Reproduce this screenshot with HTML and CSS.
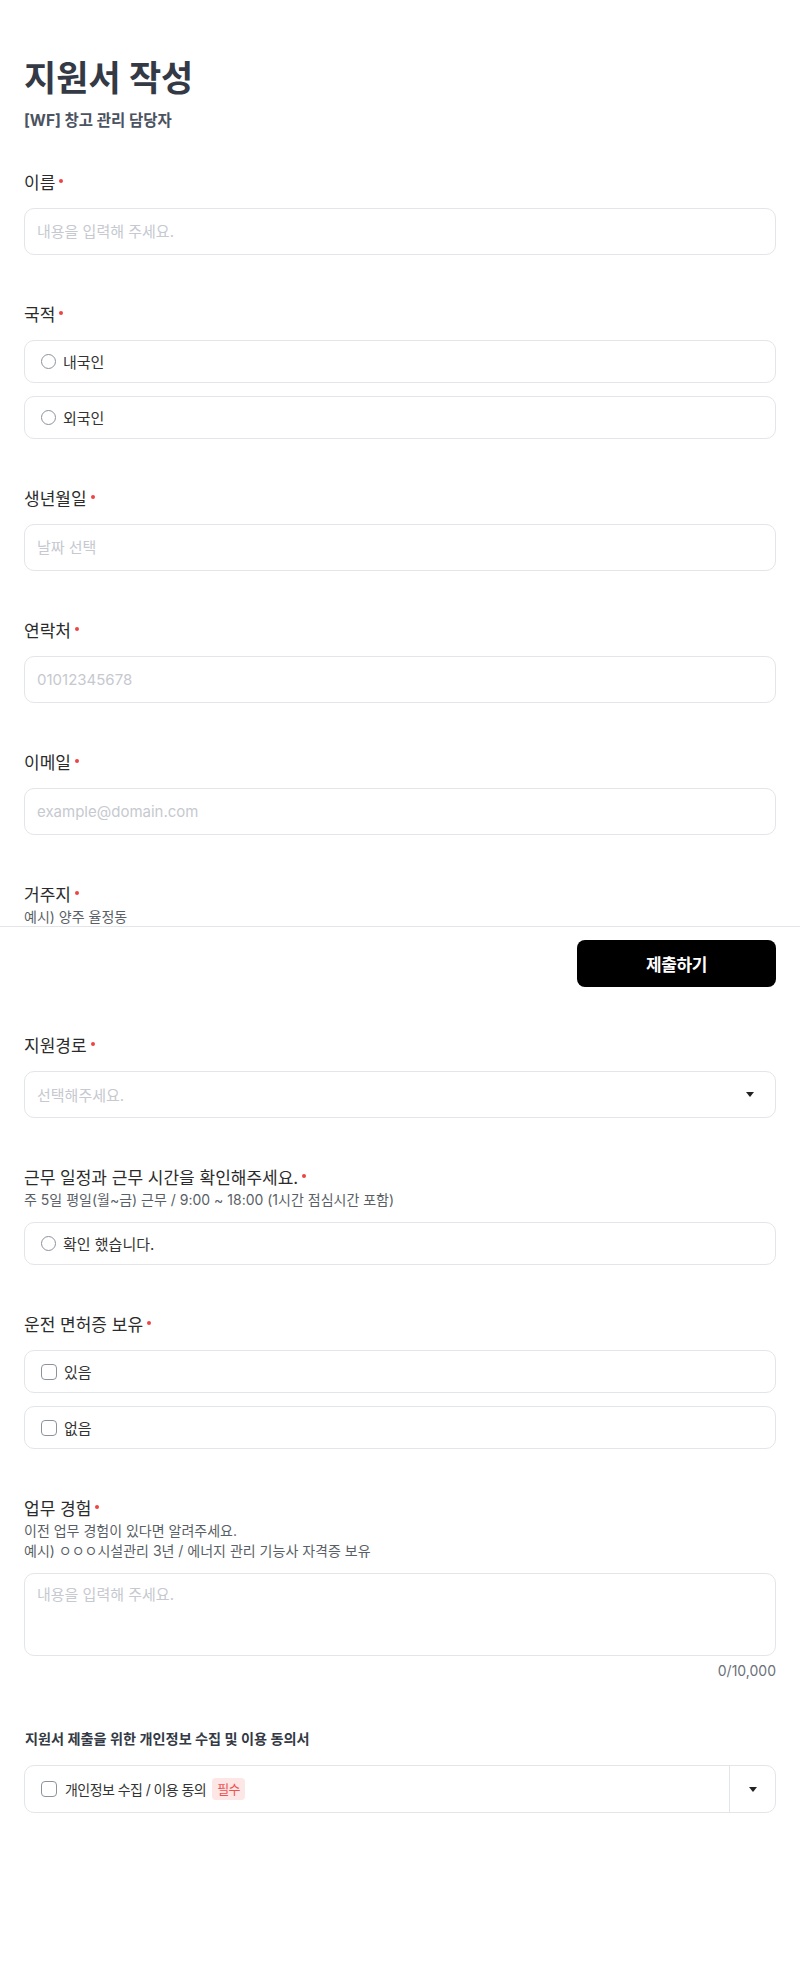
FILE: index.html
```html
<!DOCTYPE html>
<html lang="ko">
<head>
  <meta charset="UTF-8" />
  <meta name="viewport" content="width=device-width, initial-scale=1.0"/>
  <title>지원서 작성</title>
  <link rel="stylesheet" href="styles.css">
</head>
<body>
  <div class="page">
    <header class="head">
      <h1>지원서 작성</h1>
      <div class="sub">[WF] 창고 관리 담당자</div>
    </header>

    <div class="field">
      <div class="label">이름<i class="req"></i></div>
      <input class="input" type="text" placeholder="내용을 입력해 주세요.">
    </div>

    <div class="field">
      <div class="label">국적<i class="req"></i></div>
      <div class="options">
        <label class="option"><input type="radio" name="nation"><span>내국인</span></label>
        <label class="option"><input type="radio" name="nation"><span>외국인</span></label>
      </div>
    </div>

    <div class="field">
      <div class="label">생년월일<i class="req"></i></div>
      <input class="input" type="text" placeholder="날짜 선택">
    </div>

    <div class="field">
      <div class="label">연락처<i class="req"></i></div>
      <input class="input" type="text" placeholder="01012345678">
    </div>

    <div class="field">
      <div class="label">이메일<i class="req"></i></div>
      <input class="input" type="text" placeholder="example@domain.com">
    </div>

    <div class="field">
      <div class="label">거주지<i class="req"></i></div>
      <div class="help">예시) 양주 율정동</div>
      <input class="input" type="text" placeholder="내용을 입력해 주세요.">
    </div>

    <div class="field">
      <div class="label">지원경로<i class="req"></i></div>
      <div class="select">
        <span>선택해주세요.</span>
        <i class="caret"></i>
      </div>
    </div>

    <div class="field">
      <div class="label">근무 일정과 근무 시간을 확인해주세요.<i class="req"></i></div>
      <div class="help">주 5일 평일(월~금) 근무 / 9:00 ~ 18:00 (1시간 점심시간 포함)</div>
      <div class="options">
        <label class="option"><input type="radio" name="schedule"><span>확인 했습니다.</span></label>
      </div>
    </div>

    <div class="field">
      <div class="label">운전 면허증 보유<i class="req"></i></div>
      <div class="options">
        <label class="option"><input type="checkbox"><span>있음</span></label>
        <label class="option"><input type="checkbox"><span>없음</span></label>
      </div>
    </div>

    <div class="field">
      <div class="label">업무 경험<i class="req"></i></div>
      <div class="help">이전 업무 경험이 있다면 알려주세요.<br>예시) ㅇㅇㅇ시설관리 3년 / 에너지 관리 기능사 자격증 보유</div>
      <textarea class="textarea" placeholder="내용을 입력해 주세요."></textarea>
      <div class="count">0/10,000</div>
    </div>

    <div class="field">
      <div class="consent-title">지원서 제출을 위한 개인정보 수집 및 이용 동의서</div>
      <div class="consent">
        <label class="consent-main">
          <input type="checkbox">
          <span>개인정보 수집 / 이용 동의</span>
          <em class="badge">필수</em>
        </label>
        <div class="consent-toggle"><i class="caret"></i></div>
      </div>
    </div>
  </div>

  
  <div class="submit-bar">
    <button class="submit">제출하기</button>
  </div>
</body>
</html>
```

FILE: styles.css
```css
* { margin: 0; padding: 0; box-sizing: border-box; }
body {
  position: relative;
  background: #fff;
  color: #2b2b2b;
  font-family: 'Inter', 'Noto Sans CJK KR', sans-serif;
}
.page {
  padding: 56px 24px 120px;
}
.head h1 {
  font-size: 35px;
  line-height: 44px;
  font-weight: 700;
  color: #333a45;
}
.head .sub {
  margin-top: 9px;
  font-size: 15.5px;
  line-height: 24px;
  font-weight: 700;
  color: #4b5260;
}
.head + .field { margin-top: 38px; }

.field { margin-bottom: 48px; }
.label {
  font-size: 17px;
  line-height: 24px;
  color: #2b2b2b;
}
.req {
  display: inline-block;
  width: 4px;
  height: 4px;
  margin-left: 4px;
  border-radius: 50%;
  background: #ef4444;
  vertical-align: 6px;
}
.help {
  font-size: 14px;
  line-height: 20px;
  color: #5a5f67;
}
.label + .input,
.label + .select,
.label + .options { margin-top: 13px; }
.help + .input,
.help + .options,
.help + .textarea { margin-top: 12px; }

.input, .select, .textarea {
  display: block;
  width: 100%;
  height: 47px;
  padding: 0 12px;
  border: 1px solid #e3e5e9;
  border-radius: 10px;
  background: #fff;
  font-family: inherit;
  font-size: 15px;
  color: #2b2b2b;
  outline: none;
}
.input::placeholder, .textarea::placeholder { color: #c6c9cf; }

.select {
  display: flex;
  align-items: center;
  justify-content: space-between;
  color: #c6c9cf;
  padding-right: 21px;
}
.caret {
  display: block;
  width: 0;
  height: 0;
  border-left: 4px solid transparent;
  border-right: 4px solid transparent;
  border-top: 5px solid #222;
}

.options {
  display: flex;
  flex-direction: column;
  gap: 13px;
}
.option {
  display: flex;
  align-items: center;
  gap: 7px;
  height: 43px;
  padding: 0 16px;
  border: 1px solid #e3e5e9;
  border-radius: 10px;
  font-size: 15px;
  color: #333;
}
.option input, .consent-main input {
  appearance: none;
  flex: none;
  width: 15px;
  height: 15px;
  border: 1px solid #8d939c;
  border-radius: 50%;
  background: #fff;
}
.option input[type=checkbox], .consent-main input {
  width: 16px;
  height: 16px;
  border-radius: 4px;
}

.textarea {
  height: 83px;
  padding: 10px 12px;
  line-height: 22px;
  resize: none;
}
.count {
  margin-top: 5px;
  text-align: right;
  font-size: 14px;
  line-height: 20px;
  color: #6b7079;
}

.consent-title {
  padding-left: 1px;
  font-size: 14.2px;
  line-height: 20px;
  font-weight: 700;
  color: #333a45;
}
.consent {
  display: flex;
  margin-top: 16px;
  height: 48px;
  border: 1px solid #e3e5e9;
  border-radius: 10px;
}
.consent-main {
  flex: 1;
  display: flex;
  align-items: center;
  gap: 8px;
  padding: 0 16px;
  font-size: 14px;
  letter-spacing: -0.04em;
  color: #333;
}
.badge {
  font-style: normal;
  margin-left: -2px;
  padding: 0 5px;
  height: 22px;
  line-height: 22px;
  border-radius: 4px;
  background: #fde6e6;
  color: #ef5350;
  font-size: 13px;
}
.consent-toggle {
  width: 46px;
  display: flex;
  align-items: center;
  justify-content: center;
  border-left: 1px solid #e3e5e9;
}

.submit-bar {
  position: absolute;
  top: 926px;
  left: 0;
  right: 0;
  display: flex;
  justify-content: flex-end;
  padding: 13px 24px 14px;
  background: #fff;
  border-top: 1px solid #e3e5e9;
}
.submit {
  width: 199px;
  height: 47px;
  border: none;
  border-radius: 8px;
  background: #000;
  color: #fff;
  font-family: inherit;
  font-size: 17px;
  font-weight: 700;
  letter-spacing: -0.02em;
}
```
